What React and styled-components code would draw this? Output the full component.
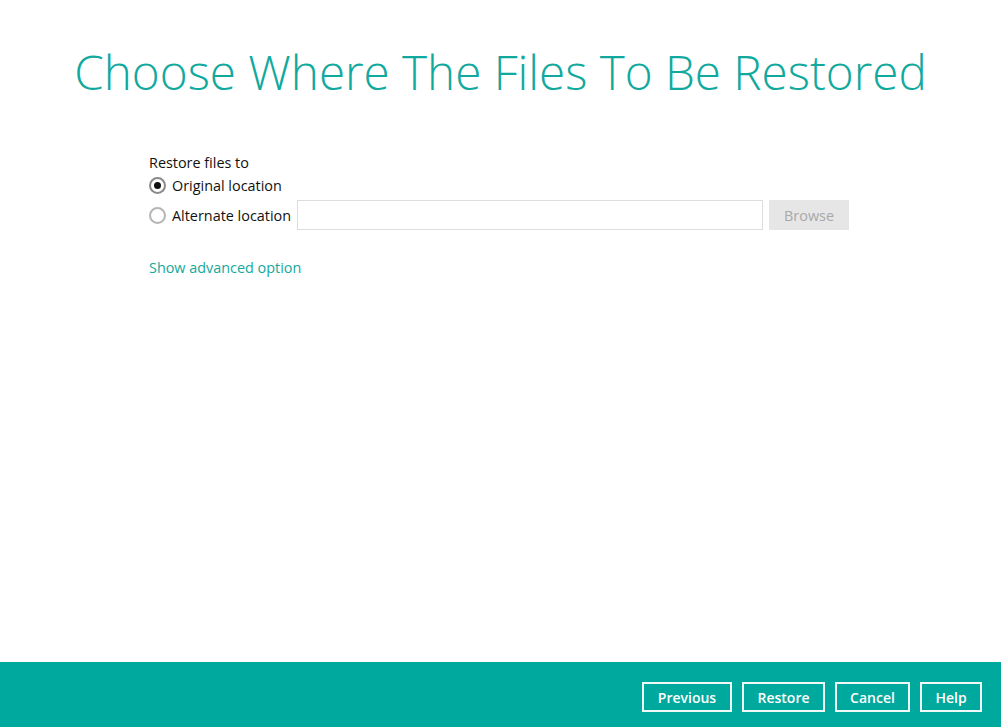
import styled, { createGlobalStyle } from "styled-components";

const Global = createGlobalStyle`
  html, body { margin: 0; padding: 0; height: 100%; }
  body { font-family: "Open Sans", "Liberation Sans", sans-serif; background: #fff; }
  #root { height: 100%; }
`;

const Page = styled.div`
  height: 727px;
  display: flex;
  flex-direction: column;
`;

const Main = styled.div`
  flex: 1;
  display: flex;
  flex-direction: column;
`;

const Title = styled.h1`
  margin: 40px 0 0 0;
  text-align: center;
  font-family: "Open Sans", sans-serif;
  font-weight: 300;
  font-size: 47.6px;
  line-height: 64px;
  color: #11a99e;
`;

const Form = styled.div`
  margin: 51px 0 0 149px;
  display: flex;
  flex-direction: column;
  font-size: 14.4px;
  color: #111;
`;

const Label = styled.div`
  line-height: 15px;
`;

const Row = styled.div`
  display: flex;
  align-items: center;
  height: 30px;
`;

const Radio = styled.span`
  box-sizing: border-box;
  width: 17px;
  height: 17px;
  border: 2px solid ${p => (p.checked ? "#8a8a8a" : "#b5b5b5")};
  border-radius: 50%;
  display: flex;
  align-items: center;
  justify-content: center;
  margin-right: 6px;
  &::after {
    content: "";
    width: 7px;
    height: 7px;
    border-radius: 50%;
    background: #111;
    display: ${p => (p.checked ? "block" : "none")};
  }
`;

const Input = styled.div`
  width: 464px;
  height: 28px;
  border: 1px solid #ddd;
  margin-left: 6px;
`;

const Browse = styled.button`
  width: 80px;
  height: 30px;
  margin-left: 6px;
  border: none;
  background: #e6e6e6;
  color: #a8a8a8;
  font-family: inherit;
  font-size: 14.4px;
`;

const Link = styled.a`
  margin-top: 28px;
  color: #14a89c;
  font-size: 14.4px;
  line-height: 20px;
`;

const Footer = styled.div`
  height: 65px;
  box-sizing: border-box;
  background: #00a99d;
  display: flex;
  justify-content: flex-end;
  align-items: flex-start;
  gap: 10px;
  padding: 20px 19px 0 0;
`;

const FootBtn = styled.button`
  height: 30px;
  width: ${p => p.w}px;
  border: 2px solid #eef9f8;
  background: transparent;
  color: #fff;
  font-family: "Open Sans", sans-serif;
  font-size: 14px;
  font-weight: 600;
  padding: 0;
`;

export default function App() {
  return (
    <Page>
      <Global />
      <Main>
        <Title>Choose Where The Files To Be Restored</Title>
        <Form>
          <Label>Restore files to</Label>
          <Row>
            <Radio checked />
            Original location
          </Row>
          <Row>
            <Radio />
            Alternate location
            <Input />
            <Browse>Browse</Browse>
          </Row>
          <Link>Show advanced option</Link>
        </Form>
      </Main>
      <Footer>
        <FootBtn w={90}>Previous</FootBtn>
        <FootBtn w={83}>Restore</FootBtn>
        <FootBtn w={75}>Cancel</FootBtn>
        <FootBtn w={62}>Help</FootBtn>
      </Footer>
    </Page>
  );
}
